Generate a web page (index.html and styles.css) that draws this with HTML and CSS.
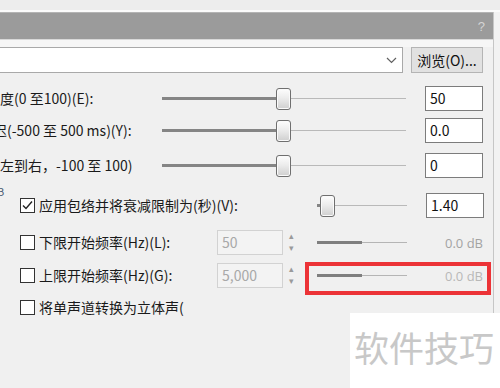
FILE: index.html
```
<!DOCTYPE html>
<html lang="zh-CN">
<head>
<meta charset="utf-8">
<title>Dialog</title>
<link rel="stylesheet" href="styles.css">
</head>
<body>
<div class="page">
  <div class="topstrip"></div>
  <div class="dialog">
    <div class="titlebar"><span class="help">?</span></div>
    <div class="content">
      <div class="filerow">
        <div class="combo">
          <svg class="chev" width="11" height="7" viewBox="0 0 11 7"><polyline points="1,1 5.5,5.5 10,1" fill="none" stroke="#606060" stroke-width="1.2"/></svg>
        </div>
        <div class="btn">浏览(O)...</div>
      </div>

      <div class="srow r1">
        <div class="slabel">度(0 至100)(E):</div>
        <div class="slider wide">
          <div class="fill" style="width:114px"></div>
          <div class="thumb"></div>
          <div class="rest"></div>
        </div>
        <div class="field">50</div>
      </div>
      <div class="srow r2">
        <div class="slabel"><span class="cut">迟</span>(-500 至 500 ms)(Y):</div>
        <div class="slider wide">
          <div class="fill" style="width:114px"></div>
          <div class="thumb"></div>
          <div class="rest"></div>
        </div>
        <div class="field">0.0</div>
      </div>
      <div class="srow r3">
        <div class="slabel">左到右，-100 至 100)</div>
        <div class="slider wide">
          <div class="fill" style="width:114px"></div>
          <div class="thumb"></div>
          <div class="rest"></div>
        </div>
        <div class="field">0</div>
      </div>

      <div class="group">
        <div class="caption">B</div>
        <div class="grow g1">
          <label class="chk wide-label">
            <span class="box"><svg width="13" height="13" viewBox="0 0 13 13"><polyline points="2,6.5 5,9.5 11,2.5" fill="none" stroke="#222" stroke-width="1.4"/></svg></span>
            <span class="ltext">应用包络并将衰减限制为(秒)(V):</span>
          </label>
          <div class="slider short">
            <div class="fill" style="width:3px"></div>
            <div class="thumb"></div>
            <div class="rest"></div>
          </div>
          <div class="field">1.40</div>
        </div>
        <div class="grow g2">
          <label class="chk"><span class="box"></span><span class="ltext">下限开始频率(Hz)(L):</span></label>
          <div class="spin">50</div>
          <div class="arrows"><span>&#9652;</span><span>&#9662;</span></div>
          <div class="meter"><div class="mfill"></div><div class="mrest"></div></div>
          <div class="db">0.0 dB</div>
        </div>
        <div class="grow g3">
          <label class="chk"><span class="box"></span><span class="ltext">上限开始频率(Hz)(G):</span></label>
          <div class="spin">5,000</div>
          <div class="arrows"><span>&#9652;</span><span>&#9662;</span></div>
          <div class="meter"><div class="mfill"></div><div class="mrest"></div></div>
          <div class="db light">0.0 dB</div>
        </div>
        <div class="grow g4">
          <label class="chk"><span class="box"></span><span class="ltext clip">将单声道转换为立体声(</span></label>
        </div>
      </div>
    </div>
  </div>
  <div class="highlight"></div>
  <div class="watermark">软件技巧</div>
</div>
</body>
</html>
```
FILE: styles.css
```
* { box-sizing: border-box; }
html, body { margin: 0; padding: 0; }
body {
  background: #f0f0f0;
  font-family: "Noto Sans CJK SC", "Noto Sans", sans-serif;
  font-size: 14px;
  color: #1a1a1a;
}
.page {
  position: relative;
  width: 500px;
  height: 388px;
  overflow: hidden;
  background: #f2f2f2;
}
.topstrip {
  height: 12px;
  background: #ededed;
  border-bottom: 2px solid #fbfbfb;
}
.dialog {
  width: 494px;
  height: 376px;
  background: #f0f0f0;
  border-right: 1px solid #c6c6c6;
}
.titlebar {
  height: 28px;
  background: #9b9b9b;
  border-top: 1px solid #b4b4b4;
  border-bottom: 1px solid #d8d8d8;
  display: flex;
  justify-content: flex-end;
  align-items: center;
  padding-right: 8px;
}
.help {
  color: #d4d4d4;
  font-family: "Liberation Sans", sans-serif;
  font-size: 13px;
}
.content {
  padding-top: 7px;
  background: linear-gradient(#f6f6f6 0, #f6f6f6 7px, #f0f0f0 7px);
}
.filerow {
  display: flex;
  height: 26px;
  margin-left: -10px;
}
.combo {
  width: 413px;
  height: 26px;
  background: #fff;
  border: 1px solid #a9a9a9;
  display: flex;
  align-items: center;
  justify-content: flex-end;
  padding-right: 5px;
}
.btn {
  margin-left: 8px;
  width: 72px;
  height: 26px;
  background: #e1e1e1;
  border: 1px solid #b4b4b4;
  display: flex;
  align-items: center;
  justify-content: center;
  font-size: 14px;
  color: #111;
  white-space: nowrap;
}
.srow {
  display: flex;
  align-items: center;
  height: 25px;
}
.r1 { margin-top: 13px; }
.r2 { margin-top: 7px; }
.r3 { margin-top: 10px; }
.slabel {
  width: 162px;
  white-space: nowrap;
  overflow: hidden;
  line-height: 25px;
}
.cut { margin-left: -7px; }
.slider {
  display: flex;
  align-items: center;
  height: 25px;
}
.slider.wide { width: 244px; }
.slider.short { width: 90px; }
.fill {
  height: 3px;
  background: #858585;
  flex: none;
}
.rest {
  flex: 1;
  height: 1px;
  background: #b9b9b9;
}
.thumb {
  flex: none;
  width: 15px;
  height: 22px;
  border: 1px solid #6f6f6f;
  border-radius: 3px;
  background: linear-gradient(#fdfdfd, #ececec 45%, #cfcfcf);
  box-shadow: inset 0 0 0 1px #fafafa;
}
.field {
  margin-left: 19px;
  width: 58px;
  height: 25px;
  background: #fff;
  border: 1px solid #7c7c7c;
  padding-left: 4px;
  line-height: 23px;
  color: #111;
}
.caption {
  height: 8px;
  margin-top: 7px;
  margin-left: -3px;
  font-size: 11px;
  line-height: 12px;
  color: #4a5a70;
}
.grow {
  display: flex;
  align-items: center;
  height: 25px;
  padding-left: 20px;
}
.g2 { margin-top: 12px; }
.g3 { margin-top: 8px; }
.g4 { margin-top: 7px; }
.chk {
  display: flex;
  align-items: center;
  width: 197px;
  white-space: nowrap;
}
.chk.wide-label { width: 297px; }
.box {
  flex: none;
  width: 15px;
  height: 15px;
  border: 1px solid #333;
  background: #fff;
  margin-right: 4px;
  display: flex;
  align-items: center;
  justify-content: center;
}
.ltext { line-height: 25px; }
.ltext.clip { width: 160px; overflow: hidden; }
.spin {
  width: 66px;
  height: 25px;
  border: 1px solid #d2d2d2;
  background: #f3f3f3;
  color: #a8a8a8;
  padding-left: 4px;
  line-height: 23px;
}
.arrows {
  width: 34px;
  height: 25px;
  display: flex;
  flex-direction: column;
  justify-content: space-between;
  padding: 1px 0 2px 6px;
  color: #9a9a9a;
  font-size: 9px;
  line-height: 10px;
}
.meter {
  width: 90px;
  display: flex;
  align-items: center;
}
.mfill { width: 45px; height: 3px; background: #7f7f7f; }
.mrest { flex: 1; height: 1px; background: #b5b5b5; }
.db {
  width: 76px;
  text-align: right;
  color: #a3a3a3;
  font-size: 13px;
  font-family: "Open Sans", "Noto Sans", sans-serif;
}
.db.light { color: #b8b8b8; }
.highlight {
  position: absolute;
  left: 305px;
  top: 262px;
  width: 186px;
  height: 33px;
  border: 4px solid #ec3337;
}
.watermark {
  position: absolute;
  left: 350px;
  top: 313px;
  width: 150px;
  height: 75px;
  background: #fff;
  color: #c8c8c8;
  font-size: 35px;
  line-height: 68px;
  padding-left: 4px;
  white-space: nowrap;
}
```
